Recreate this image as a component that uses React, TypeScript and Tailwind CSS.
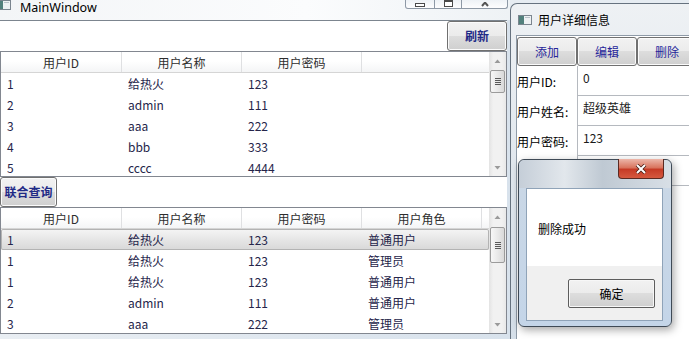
import React from "react";

const topRows = [
  ["1", "给热火", "123"],
  ["2", "admin", "111"],
  ["3", "aaa", "222"],
  ["4", "bbb", "333"],
  ["5", "cccc", "4444"],
];

const bottomRows = [
  ["1", "给热火", "123", "普通用户"],
  ["1", "给热火", "123", "管理员"],
  ["1", "给热火", "123", "普通用户"],
  ["2", "admin", "111", "普通用户"],
  ["3", "aaa", "222", "管理员"],
];

const colWidths = ["w-[121px]", "w-[120px]", "w-[120px]", "w-[120px]"];

const aeroButton =
  "rounded-[3px] border border-[#707070] bg-[linear-gradient(#f2f2f2_0%,#ebebeb_50%,#dddddd_50%,#cfcfcf_100%)] shadow-[inset_0_0_0_1px_#fbfbfb]";

function WindowIcon() {
  return (
    <svg width="14" height="10" viewBox="0 0 14 10">
      <rect x="0.5" y="0.5" width="13" height="9" fill="#eef1f3" stroke="#7b858f" />
      <rect x="1" y="1" width="5" height="8" fill="#52807c" />
      <rect x="7" y="2" width="5" height="1" fill="#b9c2c9" />
    </svg>
  );
}

function Arrow({ up }: { up?: boolean }) {
  return (
    <svg width="7" height="4" viewBox="0 0 7 4">
      <path d={up ? "M0.5 4 L3.5 0.5 L6.5 4 Z" : "M0.5 0 L3.5 3.5 L6.5 0 Z"} fill="#9a9a9a" />
    </svg>
  );
}

function ScrollBar({ thumb }: { thumb: string }) {
  return (
    <div className="flex h-full w-[17px] flex-col bg-[linear-gradient(90deg,#e3e3e3,#f1f1f1_25%,#f1f1f1_75%,#e8e8e8)]">
      <div className="flex h-[17px] items-center justify-center">
        <Arrow up />
      </div>
      <div className="flex-1">
        <div
          className={`${thumb} mx-[1px] flex flex-col items-center justify-center gap-[1px] rounded-[2px] border border-[#9b9b9b] bg-[linear-gradient(90deg,#f7f7f7,#e9e9e9_50%,#d9d9d9)]`}
        >
          <div className="h-[1px] w-[6px] bg-[#5a5a5a]" />
          <div className="h-[1px] w-[6px] bg-[#5a5a5a]" />
          <div className="h-[1px] w-[6px] bg-[#5a5a5a]" />
          <div className="h-[1px] w-[6px] bg-[#5a5a5a]" />
        </div>
      </div>
      <div className="flex h-[17px] items-center justify-center">
        <Arrow />
      </div>
    </div>
  );
}

function DataGrid({
  columns,
  rows,
  height,
  thumb,
  selected,
}: {
  columns: string[];
  rows: string[][];
  height: string;
  thumb: string;
  selected?: number;
}) {
  return (
    <div className={`${height} flex overflow-hidden border border-[#828790] bg-white`}>
      <div className="flex-1 overflow-hidden">
        <div className="flex h-[21px] border-b border-[#d5d5d5] bg-[linear-gradient(#ffffff,#ffffff_45%,#f4f5f6)]">
          {columns.map((c, i) => (
            <div
              key={c}
              className={`${colWidths[i]} shrink-0 border-r border-[#dfe0e2] text-center leading-[21px] text-[#2e2e2e]`}
            >
              {c}
            </div>
          ))}
        </div>
        {rows.map((r, i) => (
          <div
            key={i}
            className={`flex h-[21px] items-center ${
              selected === i
                ? "rounded-[2px] bg-[linear-gradient(#f5f5f5,#e6e6e6_50%,#d8d8d8)] shadow-[inset_0_0_0_1px_#b3b3b3]"
                : ""
            }`}
          >
            {r.map((cell, j) => (
              <div key={j} className={`${colWidths[j]} shrink-0 pl-[6px] leading-[21px] text-[#25254a]`}>
                {cell}
              </div>
            ))}
          </div>
        ))}
      </div>
      <ScrollBar thumb={thumb} />
    </div>
  );
}

function MainWindow() {
  return (
    <div className="flex w-[510px] shrink-0 flex-col bg-[linear-gradient(90deg,#e9eef3,#d8e2ec)]">
      <div className="flex h-[20px] items-start bg-[linear-gradient(90deg,#f3f5f7,#fbfcfd_60%,#eef2f5)]">
        <div className="ml-[-3px]">
          <WindowIcon />
        </div>
        <div className="ml-[9px] text-[12.5px] leading-[15px] text-black font-['Noto_Sans',sans-serif]">
          MainWindow
        </div>
        <div className="ml-auto mr-[2px] flex h-[9px]">
          <div className="flex w-[30px] items-end justify-center rounded-bl-[3px] border border-t-0 border-[#8e99a6] bg-[linear-gradient(#eef2f6,#fdfdfe)] pb-[1px]">
            <div className="h-[4px] w-[10px] border border-[#4a4a4a] bg-white" />
          </div>
          <div className="flex w-[27px] items-end justify-center border-b border-r border-[#8e99a6] bg-[linear-gradient(#eef2f6,#fdfdfe)] pb-[1px]">
            <div className="h-[7px] w-[9px] border border-[#4a4a4a] border-t-2 bg-white" />
          </div>
          <div className="flex w-[46px] items-end justify-center rounded-br-[3px] border-b border-r border-[#8e99a6] bg-[linear-gradient(#eef2f6,#fdfdfe)]">
            <svg width="12" height="6" viewBox="0 0 12 6">
              <path d="M3 -3 L9 4 M9 -3 L3 4" stroke="#555" strokeWidth="2" />
            </svg>
          </div>
        </div>
      </div>
      <div className="flex w-[507px] flex-col border-t border-[#7c858f] bg-white">
        <div className="flex h-[30px] justify-end">
          <button className={`${aeroButton} h-[30px] w-[60px] font-bold text-[#1f2a86]`}>刷新</button>
        </div>
        <DataGrid
          columns={["用户ID", "用户名称", "用户密码"]}
          rows={topRows}
          height="h-[126px]"
          thumb="mt-[1px] h-[23px]"
        />
        <div className="flex h-[30px]">
          <button className={`${aeroButton} h-[30px] w-[57px] font-bold text-[#1f2a86]`}>联合查询</button>
        </div>
        <DataGrid
          columns={["用户ID", "用户名称", "用户密码", "用户角色"]}
          rows={bottomRows}
          height="h-[127px]"
          thumb="mt-[2px] h-[36px]"
          selected={0}
        />
      </div>
    </div>
  );
}

function DetailWindow() {
  const fields = [
    ["用户ID:", "0"],
    ["用户姓名:", "超级英雄"],
    ["用户密码:", "123"],
    ["", ""],
  ];
  return (
    <div className="mt-[3px] flex w-[190px] shrink-0 flex-col rounded-tl-[7px] border-l border-t border-[#66727f] bg-[linear-gradient(#eef1f4,#e3e9ef_40%,#d5dfe9)]">
      <div className="flex h-[31px] items-center pl-[7px]">
        <WindowIcon />
        <span className="ml-[6px] text-black">用户详细信息</span>
      </div>
      <div className="ml-[5px] flex flex-1 flex-col border-l border-t border-[#8e9aa7] bg-white">
        <div className="mt-[1px] flex h-[29px]">
          {["添加", "编辑", "删除"].map((t) => (
            <button key={t} className={`${aeroButton} h-[29px] w-[60px] shrink-0 text-[#26269a]`}>
              {t}
            </button>
          ))}
        </div>
        <div className="grid grid-cols-[60px_1fr]">
          {fields.map(([label, value], i) => (
            <React.Fragment key={i}>
              <div className="flex h-[30px] items-center pt-[2px] text-black">{label}</div>
              <div className="h-[30px] border-b border-l border-[#b5b9bf] pl-[5px] pt-[3px] leading-[18px] text-[#1a1a1a]">
                {value}
              </div>
            </React.Fragment>
          ))}
        </div>
      </div>
    </div>
  );
}

function MessageBox() {
  return (
    <div className="absolute left-[518px] top-[159px] flex h-[168px] w-[154px] flex-col rounded-[6px] border border-[#3f4a56] bg-[linear-gradient(#d3dde7,#c9d7e6_20%,#c4d5e8)] shadow-[2px_3px_8px_rgba(0,0,0,0.35)]">
      <div className="relative h-[28px] rounded-t-[6px] bg-[linear-gradient(90deg,#c5ced8,#e2e7ec_30%,#bfc9d3_55%,#d8dfe6)]">
        <div className="absolute left-[99px] top-[-1px] flex h-[20px] w-[46px] items-center justify-center rounded-b-[4px] border border-t-0 border-[#5b2a22] bg-[linear-gradient(#ecb7aa_0%,#d9755f_45%,#c63b26_55%,#d5593f_100%)]">
          <svg width="12" height="10" viewBox="0 0 12 10">
            <path d="M2 1 L10 9 M10 1 L2 9" stroke="#4a1e15" strokeWidth="3.6" />
            <path d="M2 1 L10 9 M10 1 L2 9" stroke="#ffffff" strokeWidth="2" />
          </svg>
        </div>
      </div>
      <div className="mb-[5px] ml-[7px] mr-[8px] flex flex-1 flex-col border border-[#8fa3b8] bg-white">
        <div className="flex h-[77px] items-start pl-[11px] pt-[31px] leading-[18px] text-black">删除成功</div>
        <div className="flex flex-1 items-start justify-end bg-[#f0f0f0] pr-[7px] pt-[13px]">
          <button className="h-[29px] w-[87px] rounded-[2px] border border-[#5d5d5d] bg-[linear-gradient(#f2f2f2_0%,#ebebeb_50%,#dddddd_50%,#cfcfcf_100%)] text-black shadow-[inset_0_0_0_1px_#f7f7f7]">
            确定
          </button>
        </div>
      </div>
    </div>
  );
}

export default function App() {
  return (
    <div className="relative flex h-[339px] w-[689px] overflow-hidden bg-[#e6ecf2] text-[12px] font-['Noto_Sans_CJK_SC','Noto_Sans',sans-serif]">
      <MainWindow />
      <DetailWindow />
      <MessageBox />
    </div>
  );
}
